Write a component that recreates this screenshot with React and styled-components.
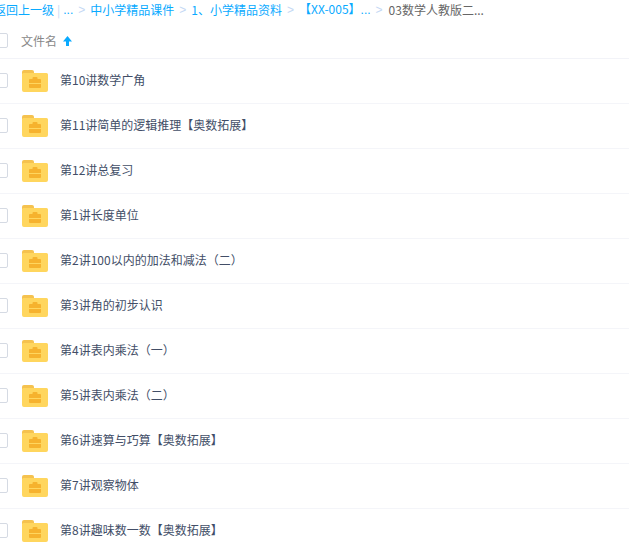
import React from 'react';
import styled, { createGlobalStyle } from 'styled-components';

const GlobalStyle = createGlobalStyle`
  html, body {
    margin: 0;
    padding: 0;
    background: #fff;
    overflow: hidden;
    height: 100%;
  }
  body {
    font-family: 'Noto Sans CJK SC', 'Liberation Sans', sans-serif;
    font-size: 12px;
  }
`;

const Page = styled.div`
  width: 636px;
  margin-left: -7px;
  height: 548px;
  overflow: hidden;
`;

const Breadcrumb = styled.div`
  display: flex;
  align-items: center;
  height: 18px;
  padding: 1px 0 0 1px;
  box-sizing: border-box;
  white-space: nowrap;
  line-height: 18px;
`;

const Crumb = styled.a`
  color: #09aaff;
  text-decoration: none;
`;

const Dots = styled.span`
  color: #09aaff;
  font-family: 'Liberation Sans', sans-serif;
  font-size: 12px;
`;

const Divider = styled.span`
  color: #c4d8f4;
  margin: 0 3px;
`;

const Arrow = styled.span`
  color: #c4d8f4;
  margin: 0 5px;
  font-family: 'Liberation Sans', sans-serif;
`;

const Current = styled.span`
  color: #666;
  margin-left: 1px;
`;

const HeaderRow = styled.div`
  display: flex;
  align-items: center;
  height: 41px;
  padding-top: 5px;
  box-sizing: border-box;
  border-bottom: 1px solid #f2f3f8;
`;

const Row = styled.div`
  display: flex;
  align-items: center;
  height: 45px;
  box-sizing: border-box;
  border-bottom: 1px solid #f4f5f9;
`;

const Check = styled.span`
  width: 13px;
  height: 13px;
  margin-bottom: ${props => (props.$inRow ? '1px' : '0')};
  border: 1px solid #d5dae3;
  border-radius: 2px;
  background: #fff;
  flex: none;
`;

const HeaderLabel = styled.span`
  margin-left: 13px;
  color: #888;
`;

const SortIcon = styled.svg`
  width: 9px;
  height: 10px;
  margin-left: 6px;
  flex: none;
`;

const FolderIcon = styled.svg`
  width: 26px;
  height: 22px;
  margin-left: 14px;
  margin-bottom: 1px;
  flex: none;
`;

const Name = styled.span`
  margin-left: 12px;
  margin-bottom: 3px;
  color: #424e67;
`;

const files = [
  '第10讲数学广角',
  '第11讲简单的逻辑推理【奥数拓展】',
  '第12讲总复习',
  '第1讲长度单位',
  '第2讲100以内的加法和减法（二）',
  '第3讲角的初步认识',
  '第4讲表内乘法（一）',
  '第5讲表内乘法（二）',
  '第6讲速算与巧算【奥数拓展】',
  '第7讲观察物体',
  '第8讲趣味数一数【奥数拓展】',
];

const Folder = () => (
  <FolderIcon viewBox="0 0 26 22">
    <path d="M0 2a2 2 0 0 1 2-2h8a2 2 0 0 1 2 2v2H0z" fill="#f5c24f" />
    <path d="M0 4.500a1.500 1.500 0 0 1 1.500-1.500H24.500A1.500 1.500 0 0 1 26 4.500V20a2 2 0 0 1-2 2H2a2 2 0 0 1-2-2z" fill="#ffd65e" />
    <path d="M7 10a1 1 0 0 1 1-1h2.500V8a1 1 0 0 1 1-1h3a1 1 0 0 1 1 1v1H18a1 1 0 0 1 1 1v3H7z" fill="#f6b22e" />
    <path d="M7 14h12v3a1 1 0 0 1-1 1H8a1 1 0 0 1-1-1z" fill="#f6b22e" />
  </FolderIcon>
);

const App = () => (
  <Page>
    <GlobalStyle />
    <Breadcrumb>
      <Crumb>返回上一级</Crumb>
      <Divider>|</Divider>
      <Dots>...</Dots>
      <Arrow>&gt;</Arrow>
      <Crumb>中小学精品课件</Crumb>
      <Arrow>&gt;</Arrow>
      <Crumb>1、小学精品资料</Crumb>
      <Arrow>&gt;</Arrow>
      <Crumb>【XX-005】<Dots>...</Dots></Crumb>
      <Arrow>&gt;</Arrow>
      <Current>03数学人教版二...</Current>
    </Breadcrumb>
    <HeaderRow>
      <Check />
      <HeaderLabel>文件名</HeaderLabel>
      <SortIcon viewBox="0 0 9 10">
        <path d="M4.500 0 9 5.500H6V10H3V5.500H0z" fill="#09aaff" />
      </SortIcon>
    </HeaderRow>
    {files.map(name => (
      <Row key={name}>
        <Check $inRow />
        <Folder />
        <Name>{name}</Name>
      </Row>
    ))}
  </Page>
);

export default App;
